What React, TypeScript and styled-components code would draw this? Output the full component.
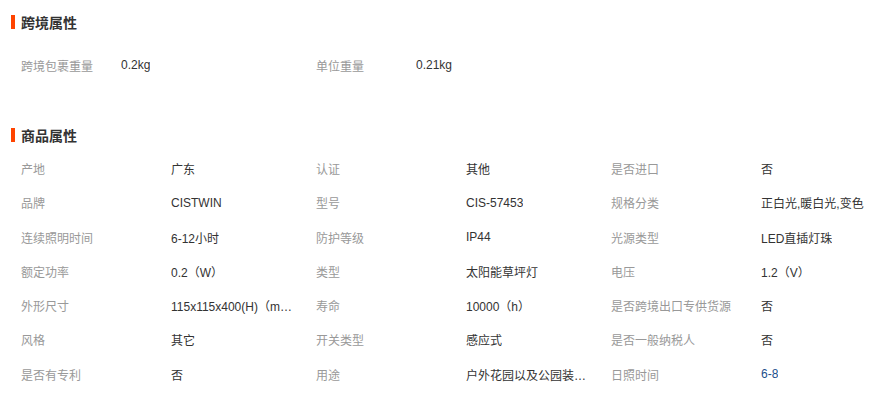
import React from 'react';
import styled, { createGlobalStyle } from 'styled-components';

const GlobalStyle = createGlobalStyle`
  body {
    margin: 0;
    background: #fff;
    font-family: 'Liberation Sans', 'Noto Sans CJK SC', sans-serif;
  }
`;

const Page = styled.div`
  width: 885px;
  padding-top: 12px;
`;

const Section = styled.section<{ gapAfter?: number }>`
  margin-bottom: ${props => props.gapAfter ?? 0}px;
`;

const Title = styled.h3`
  display: flex;
  align-items: center;
  gap: 6px;
  margin: 0;
  padding-left: 11px;
  height: 20px;
  font-size: 14px;
  font-weight: 700;
  color: #333;

  &::before {
    content: '';
    display: block;
    width: 4px;
    height: 14px;
    background: #f40;
  }
`;

const Grid = styled.div<{ top: number }>`
  display: grid;
  grid-template-columns: repeat(3, 295px);
  margin-top: ${props => props.top}px;
`;

const Cell = styled.div`
  display: flex;
  align-items: center;
  height: 34.3px;
  padding-left: 21px;
  font-size: 12px;
`;

const Label = styled.span<{ width: number }>`
  flex: none;
  width: ${props => props.width}px;
  color: #999;
  white-space: nowrap;
`;

const Value = styled.span<{ link?: boolean }>`
  max-width: 124px;
  overflow: hidden;
  white-space: nowrap;
  text-overflow: ellipsis;
  color: ${props => (props.link ? '#22508c' : '#333')};
`;

type Attr = { label: string; value: string; link?: boolean };

const crossBorder: Attr[] = [
  { label: '跨境包裹重量', value: '0.2kg' },
  { label: '单位重量', value: '0.21kg' },
];

const product: Attr[] = [
  { label: '产地', value: '广东' },
  { label: '认证', value: '其他' },
  { label: '是否进口', value: '否' },
  { label: '品牌', value: 'CISTWIN' },
  { label: '型号', value: 'CIS-57453' },
  { label: '规格分类', value: '正白光,暖白光,变色' },
  { label: '连续照明时间', value: '6-12小时' },
  { label: '防护等级', value: 'IP44' },
  { label: '光源类型', value: 'LED直插灯珠' },
  { label: '额定功率', value: '0.2（W）' },
  { label: '类型', value: '太阳能草坪灯' },
  { label: '电压', value: '1.2（V）' },
  { label: '外形尺寸', value: '115x115x400(H)（mm）' },
  { label: '寿命', value: '10000（h）' },
  { label: '是否跨境出口专供货源', value: '否' },
  { label: '风格', value: '其它' },
  { label: '开关类型', value: '感应式' },
  { label: '是否一般纳税人', value: '否' },
  { label: '是否有专利', value: '否' },
  { label: '用途', value: '户外花园以及公园装饰照明' },
  { label: '日照时间', value: '6-8', link: true },
];

const App: React.FC = () => {
  return <Page>
    <GlobalStyle />
    <Section gapAfter={43}>
      <Title>跨境属性</Title>
      <Grid top={16}>
        {crossBorder.map(a => (
          <Cell key={a.label}>
            <Label width={100}>{a.label}</Label>
            <Value>{a.value}</Value>
          </Cell>
        ))}
      </Grid>
    </Section>
    <Section>
      <Title>商品属性</Title>
      <Grid top={6}>
        {product.map(a => (
          <Cell key={a.label}>
            <Label width={150}>{a.label}</Label>
            <Value link={a.link} title={a.value}>{a.value}</Value>
          </Cell>
        ))}
      </Grid>
    </Section>
  </Page>;
};

export default App;
